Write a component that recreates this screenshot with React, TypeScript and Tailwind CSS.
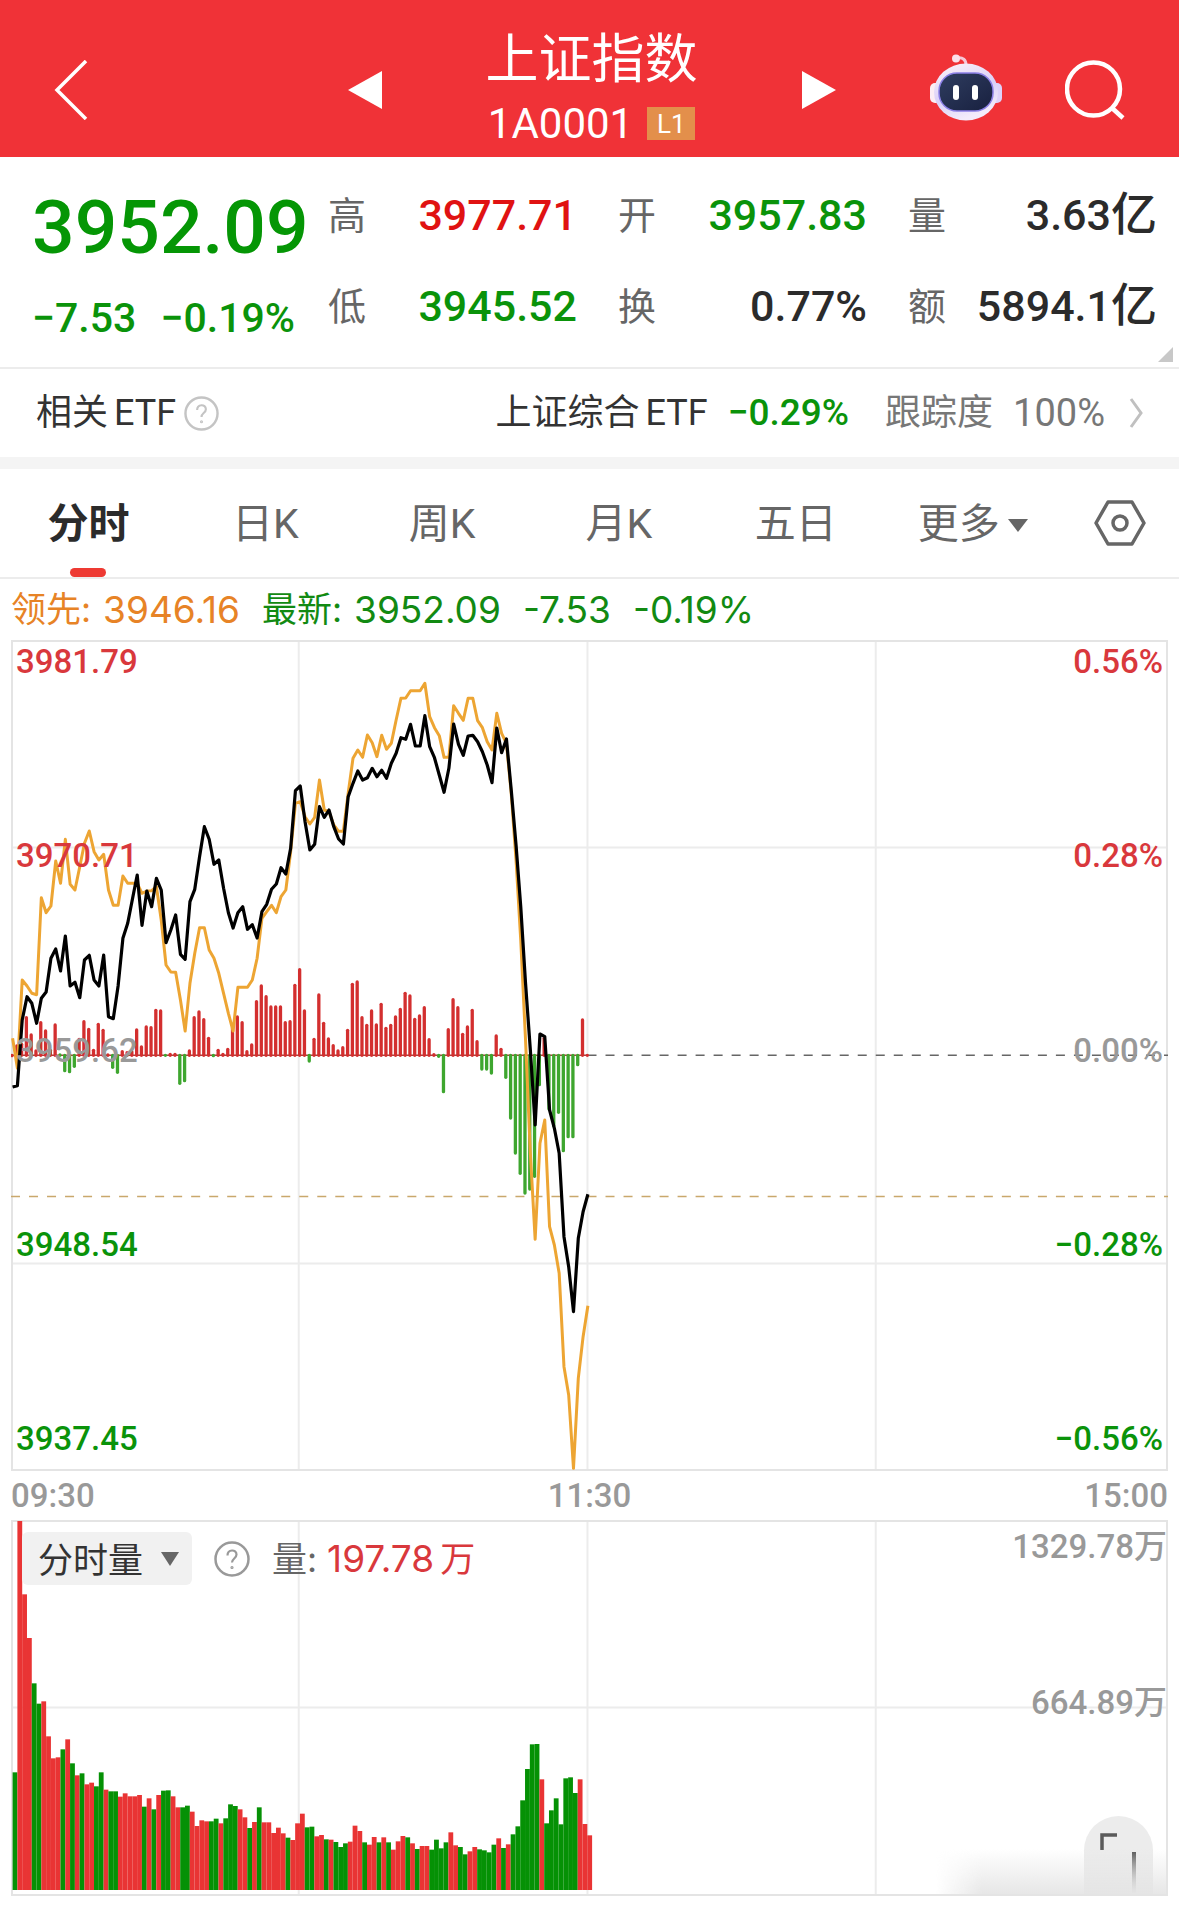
import React from 'react';

const price = [1371,1367,1170,1100,1120,1180,1105,1086,985,957,1023,918,1068,1057,1103,990,976,1050,1068,975,1160,1166,1068,925,880,808,735,886,783,830,745,780,938,900,855,973,988,815,778,680,590,628,703,690,775,848,894,848,830,898,884,924,845,823,778,762,713,732,655,482,468,575,660,643,530,562,540,590,627,642,500,460,423,450,443,415,440,421,445,400,370,323,328,283,348,348,257,350,383,435,487,415,282,343,376,318,316,335,365,405,458,294,368,327,480,645,830,1060,1260,1485,1212,1220,1440,1495,1570,1820,1910,2045,1825,1745,1693];

const lead = [1225,1315,1050,1068,1090,1094,803,848,828,693,760,628,763,780,710,640,603,665,690,673,780,826,826,738,760,760,760,790,783,782,770,870,1005,1026,1027,1110,1203,1060,970,893,893,960,985,1030,1090,1150,1203,1072,1072,1072,1050,985,865,845,826,848,800,780,665,520,515,560,582,562,450,540,545,585,604,604,490,385,360,382,315,338,380,316,358,340,270,205,204,182,182,182,160,260,293,317,382,382,227,250,271,205,205,272,293,335,360,250,310,340,490,690,930,1230,1570,1828,1540,1470,1790,1845,1930,2210,2295,2515,2245,2120,2027];

const momentum = [1274,1245,1240,1160,1212,1260,1175,1200,1258,1182,1278,1325,1328,1312,1225,1172,1195,1258,1180,1198,1272,1315,1330,1262,1265,1262,1197,1248,1188,1190,1138,1140,1279,1270,1270,1363,1355,1260,1160,1143,1166,1222,1280,1258,1270,1255,1190,1158,1175,1262,1242,1112,1065,1097,1128,1128,1128,1175,1172,1063,1016,1140,1296,1225,1092,1177,1224,1244,1260,1250,1198,1060,1053,1160,1183,1140,1182,1120,1192,1183,1158,1135,1087,1095,1165,1155,1130,1226,1271,1282,1388,1196,1106,1130,1210,1188,1138,1232,1320,1320,1332,1215,1255,1345,1467,1572,1633,1692,1680,1642,1367,1222,1440,1490,1450,1565,1523,1523,1307,1167,1273];

const volume = '969G 215R 435R 566R 702G 763G 756R 861R 927R 924R 900G 870R 942G 978R 972G 1005R 1000R 1011G 969G 1021R 1026G 1026G 1042R 1032R 1041R 1041R 1037R 1072G 1047R 1080G 1037R 1024G 1023G 1041R 1074R 1074G 1069G 1087R 1130R 1113R 1116R 1116G 1108G 1122R 1107G 1065G 1070G 1080R 1104R 1136G 1118R 1074G 1119R 1119R 1151R 1135R 1152R 1165G 1172R 1122R 1093R 1134G 1132G 1161R 1157R 1170G 1171R 1178G 1193G 1182G 1177R 1129R 1145R 1179G 1186R 1163R 1179G 1164R 1179G 1201R 1176R 1160R 1164G 1182R 1199G 1190R 1190R 1201G 1171G 1197G 1179G 1149R 1188R 1193G 1215G 1206R 1193R 1200G 1203G 1209G 1186G 1167R 1196G 1185R 1155G 1131G 1053G 959G 885G 884G 990R 1122G 1083G 1047G 1125G 987G 984G 1031G 990R 1124R 1158R'
  .split(' ')
  .map((s) => ({ top: parseInt(s, 10), up: s.endsWith('R') }));

const STEP = 4.79;
const toY = (v: number) => v / 3 - 10;
const toX = (i: number) => 1.6 + i * STEP;
const linePoints = (values: number[]) => values.map((v, i) => `${toX(i).toFixed(1)},${toY(v).toFixed(1)}`).join(' ');
const BASE = toY(1276);

function PriceChart() {
  return (
    <svg className="block h-full w-full" viewBox="0 0 1156 831" preserveAspectRatio="none" role="img" aria-label="分时走势">
      <path d="M287.500 0V831M576 0V831M864 0V831M0 207.500H1156M0 623.500H1156" stroke="#ececec" strokeWidth="2" />
      <rect x="1" y="1" width="1154" height="829" fill="none" stroke="#e4e4e4" strokeWidth="2" />
      <path d={`M576 ${BASE}H1156`} stroke="#666" strokeWidth="1.500" strokeDasharray="9 9" />
      <path d={`M0 ${BASE}H576`} stroke="#a8403a" strokeWidth="1.500" />
      {momentum.map((v, i) => (
        <line key={i} x1={toX(i) - 0.6} x2={toX(i) - 0.6} y1={BASE} y2={v < 1276 ? toY(v) + 1 : toY(v) - 1} strokeWidth="3.300" strokeLinecap="round" stroke={v < 1276 ? '#d32f2f' : '#3ea62f'} />
      ))}
      <path d="M0 556.500H1156" stroke="#c9a86c" strokeWidth="1.500" strokeDasharray="9 9" />
      <polyline points={linePoints(lead)} fill="none" stroke="#eda533" strokeWidth="3" strokeLinejoin="round" />
      <polyline points={linePoints(price)} fill="none" stroke="#000" strokeWidth="3.200" strokeLinejoin="round" />
    </svg>
  );
}

function VolumeChart() {
  return (
    <svg className="block h-full w-full" viewBox="0 0 1156 376" preserveAspectRatio="none" role="img" aria-label="分时成交量">
      <path d="M287.500 0V376M576 0V376M864 0V376M0 187.500H1156" stroke="#ececec" strokeWidth="2" />
      <rect x="1" y="1" width="1154" height="374" fill="none" stroke="#e4e4e4" strokeWidth="2" />
      {volume.map((b, i) => (
        <rect key={i} x={1.6 + i * 4.785} y={(b.top - 212) / 3} width="4.800" height={(1322 - b.top) / 3} fill={b.up ? '#e93434' : '#059105'} />
      ))}
    </svg>
  );
}

function Robot() {
  return (
    <svg width="74" height="68" viewBox="0 0 74 68" fill="none" aria-hidden="true">
      <defs>
        <linearGradient id="shell" x1="0" y1="0" x2="0.400" y2="1">
          <stop offset="0" stopColor="#fff5f8" />
          <stop offset="0.600" stopColor="#d9d0f8" />
          <stop offset="1" stopColor="#f3ecfb" />
        </linearGradient>
        <linearGradient id="screen" x1="0" y1="0" x2="1" y2="1">
          <stop offset="0" stopColor="#2f3d60" />
          <stop offset="1" stopColor="#18203f" />
        </linearGradient>
      </defs>
      <path d="M27 4c6-1 9 2 9 7" stroke="#f6c6d6" strokeWidth="3" />
      <circle cx="26" cy="4.500" r="4" fill="#fbe0ea" />
      <rect x="0" y="29" width="12" height="20" rx="5" fill="#fbeef5" />
      <rect x="60" y="29" width="12" height="20" rx="5" fill="#ddd2fa" />
      <ellipse cx="36" cy="38" rx="32" ry="28.500" fill="url(#shell)" />
      <rect x="9" y="19" width="54" height="38" rx="18" fill="url(#screen)" stroke="#8a7fe6" strokeWidth="1.500" />
      <rect x="23" y="31" width="6" height="15" rx="3" fill="#fff" />
      <rect x="42" y="31" width="6" height="15" rx="3" fill="#fff" />
    </svg>
  );
}

function Help({ className }: { className: string }) {
  return (
    <svg className={className} viewBox="0 0 36 36" fill="none" stroke="currentColor" aria-hidden="true">
      <circle cx="18" cy="18" r="16.500" strokeWidth="2.500" />
      <path d="M13.500 14.500c0-6.500 9-6.500 9-1 0 4-4.500 4-4.500 8" strokeWidth="2.200" />
      <circle cx="18" cy="26.500" r="1" strokeWidth="1.200" />
    </svg>
  );
}

function Triangle({ className }: { className: string }) {
  return (
    <svg className={className} viewBox="0 0 18 14" preserveAspectRatio="none" fill="currentColor" aria-hidden="true">
      <path d="M0 0H18L9 14Z" />
    </svg>
  );
}

const stats = [
  { label: '高', value: '3977.71', unit: '', tone: 'text-[#e01212]' },
  { label: '开', value: '3957.83', unit: '', tone: 'text-[#0a930a]' },
  { label: '量', value: '3.63', unit: '亿', tone: 'text-[#2b2b2b]' },
  { label: '低', value: '3945.52', unit: '', tone: 'text-[#0a930a]' },
  { label: '换', value: '0.77%', unit: '', tone: 'text-[#2b2b2b]' },
  { label: '额', value: '5894.1', unit: '亿', tone: 'text-[#2b2b2b]' },
];

const tabs = ['分时', '日K', '周K', '月K', '五日', '更多'];

const levels = [
  { price: '3981.79', change: '0.56%', tone: 'text-[#d9383c]' },
  { price: '3970.71', change: '0.28%', tone: 'text-[#d9383c]' },
  { price: '3959.62', change: '0.00%', tone: 'text-[#999]' },
  { price: '3948.54', change: '−0.28%', tone: 'text-[#0a930a]' },
  { price: '3937.45', change: '−0.56%', tone: 'text-[#0a930a]' },
];

export default function App() {
  return (
    <main className="w-full bg-white font-[Roboto,'Noto_Sans_CJK_SC',sans-serif] text-[#333]">
      <header className="grid h-[157px] grid-cols-[1fr_auto_1fr] items-center bg-[#f03237] pt-[22px] text-white">
        <button aria-label="返回" className="ml-[54px] justify-self-start">
          <svg width="34" height="60" viewBox="0 0 34 60" fill="none" stroke="currentColor" strokeWidth="3.500" aria-hidden="true">
            <path d="M32 1L3 30L32 59" />
          </svg>
        </button>
        <div className="ml-1 flex w-[488px] items-center justify-between">
          <button aria-label="上一个">
            <svg width="34" height="38" viewBox="0 0 34 38" fill="currentColor" aria-hidden="true"><path d="M34 0V38L0 19Z" /></svg>
          </button>
          <div className="flex flex-col items-center pt-1">
            <h1 className="text-[53px] leading-[64px]">上证指数</h1>
            <p className="flex items-center gap-[14px] text-[42px] leading-[64px]">
              1A0001
              <span className="flex h-[33px] w-12 items-center justify-center bg-[#e38f4b] text-[26px]">L1</span>
            </p>
          </div>
          <button aria-label="下一个">
            <svg width="34" height="38" viewBox="0 0 34 38" fill="currentColor" aria-hidden="true"><path d="M0 0V38L34 19Z" /></svg>
          </button>
        </div>
        <div className="mr-[54px] flex items-center gap-[61px] justify-self-end">
          <button aria-label="智能助手" className="pb-1"><Robot /></button>
          <button aria-label="搜索">
            <svg width="60" height="60" viewBox="0 0 60 60" fill="none" stroke="currentColor" aria-hidden="true">
              <circle cx="28.500" cy="29" r="26.500" strokeWidth="4.500" />
              <path d="M47 48L58 58" strokeWidth="4.500" />
            </svg>
          </button>
        </div>
      </header>

      <section className="relative flex h-[212px] items-start border-b-2 border-[#ececec] pr-[22px] pl-8">
        <div className="w-[296px] shrink-0 pt-[25px]">
          <p className="text-[75px] leading-[90px] font-medium text-[#059605]">3952.09</p>
          <p className="flex gap-6 text-[41px] leading-[92px] font-medium whitespace-nowrap text-[#0a930a]">
            <span>−7.53</span>
            <span>−0.19%</span>
          </p>
        </div>
        <dl className="grid flex-1 grid-cols-3 gap-x-[41px] pt-3">
          {stats.map((s) => (
            <div key={s.label} className="flex h-[91px] items-center justify-between">
              <dt className="pt-1 text-[38px] text-[#666]">{s.label}</dt>
              <dd className={`text-[43px] leading-[60px] font-medium whitespace-nowrap ${s.tone}`}>
                {s.value}
                {s.unit && <span className="text-[46px]">{s.unit}</span>}
              </dd>
            </div>
          ))}
        </dl>
        <svg className="absolute right-[6px] bottom-[5px] size-[15px]" viewBox="0 0 15 15" fill="#c8c8c8" aria-hidden="true"><path d="M15 0V15H0Z" /></svg>
      </section>

      <section className="flex h-[88px] items-center justify-between pr-9 pl-9 text-[36px] whitespace-nowrap">
        <div className="flex items-center gap-2">
          <span className="flex gap-[6px]"><span>相关</span><span>ETF</span></span>
          <button aria-label="说明"><Help className="size-[35px] text-[#c4c4c4]" /></button>
        </div>
        <a href="#etf" className="flex items-center">
          <span className="flex gap-[6px]"><span>上证综合</span><span>ETF</span></span>
          <span className="ml-5 text-[37px] font-medium text-[#0a930a]">−0.29%</span>
          <span className="ml-9 text-[#777]">跟踪度</span>
          <span className="ml-5 text-[38px] text-[#777]">100%</span>
          <svg className="ml-6 h-[30px] w-[14px]" viewBox="0 0 14 30" fill="none" stroke="#c0c0c0" strokeWidth="3" aria-hidden="true"><path d="M2 1L12 15L2 29" /></svg>
        </a>
      </section>
      <div className="h-3 bg-[#f4f4f4]" />

      <nav className="flex h-[110px] border-b-2 border-[#ececec] text-[41px] text-[#666]">
        {tabs.map((t, i) => (
          <button key={t} className={`relative flex w-[15%] items-center justify-center gap-2 pt-1 ${i === 0 ? 'font-bold text-[#2b2b2b]' : ''}`}>
            {t}
            {t === '更多' && <Triangle className="h-[13px] w-5" />}
            {i === 0 && <span className="absolute bottom-0 h-[9px] w-9 rounded-full bg-[#ee3a33]" />}
          </button>
        ))}
        <button aria-label="设置" className="flex flex-1 items-center justify-center">
          <svg width="52" height="46" viewBox="0 0 52 46" fill="none" stroke="#666" strokeWidth="3.500" strokeLinejoin="round" aria-hidden="true">
            <path d="M14 2H38L50 23L38 44H14L2 23Z" />
            <circle cx="26" cy="23" r="7" />
          </svg>
        </button>
      </nav>

      <section className="flex h-[61px] items-center gap-[22px] px-[11px] font-[Inter,'Noto_Sans_CJK_SC',sans-serif] text-[37px] whitespace-nowrap text-[#128a12]">
        <p className="flex items-center gap-3 text-[#e78326]"><span className="text-[35px]">领先:</span>3946.16</p>
        <p className="flex items-center gap-3"><span className="text-[35px]">最新:</span>3952.09</p>
        <span>-7.53</span>
        <span>-0.19%</span>
      </section>

      <section className="relative mx-[11px] h-[831px] text-[33px] leading-9 font-medium">
        <PriceChart />
        <ul className="absolute inset-0 flex flex-col justify-between pt-1 pr-[5px] pb-[14px] pl-[5px]">
          {levels.map((l) => (
            <li key={l.price} className={`flex justify-between ${l.tone}`}>
              <span>{l.price}</span>
              <span>{l.change}</span>
            </li>
          ))}
        </ul>
      </section>

      <div className="mx-[11px] flex h-[49px] items-center justify-between text-[33px] leading-9 font-medium text-[#999]">
        <span>09:30</span>
        <span>11:30</span>
        <span>15:00</span>
      </div>

      <section className="relative mx-[11px] h-[376px]">
        <VolumeChart />
        <div className="absolute top-[11px] left-[11px] flex items-center text-[35px]">
          <label className="relative flex items-center">
            <select aria-label="指标" className="h-[53px] w-[170px] appearance-none rounded-md bg-[#f1f1f1] pt-1 pl-4 text-[#333]">
              <option>分时量</option>
            </select>
            <Triangle className="pointer-events-none absolute right-[13px] h-[14px] w-[18px] text-[#666]" />
          </label>
          <button aria-label="指标说明" className="ml-[22px]"><Help className="size-9 text-[#999]" /></button>
          <p className="ml-[22px] flex items-center font-[Inter,'Noto_Sans_CJK_SC',sans-serif] text-[35px]">
            <span className="text-[#666]">量:</span>
            <span className="ml-[10px] text-[37px] text-[#d9383c]">197.78</span>
            <span className="ml-[6px] text-[#d9383c]">万</span>
          </p>
        </div>
        <div className="absolute top-[7px] right-px flex flex-col items-end gap-[116px] text-[33px] leading-10 font-medium text-[#999]">
          <span>1329.78万</span>
          <span>664.89万</span>
        </div>
        <button aria-label="全屏" className="absolute right-[15px] bottom-[2px] h-[78px] w-[69px] rounded-t-full bg-[#ececec]">
          <svg className="block h-full w-full" viewBox="0 0 69 78" fill="none" aria-hidden="true">
            <defs>
              <linearGradient id="stem" x1="0" y1="0" x2="0" y2="1">
                <stop offset="0" stopColor="#555" />
                <stop offset="1" stopColor="#ddd" />
              </linearGradient>
            </defs>
            <path d="M18 34V19H33" stroke="#5a5a5a" strokeWidth="3.500" />
            <rect x="48" y="36" width="4" height="41" fill="url(#stem)" />
          </svg>
        </button>
        <div className="pointer-events-none absolute right-[2px] bottom-[2px] h-[46px] w-[230px] bg-linear-to-b from-[#e4e4e4]/0 to-[#e4e4e4]/90 mask-l-from-80%" />
      </section>
    </main>
  );
}
